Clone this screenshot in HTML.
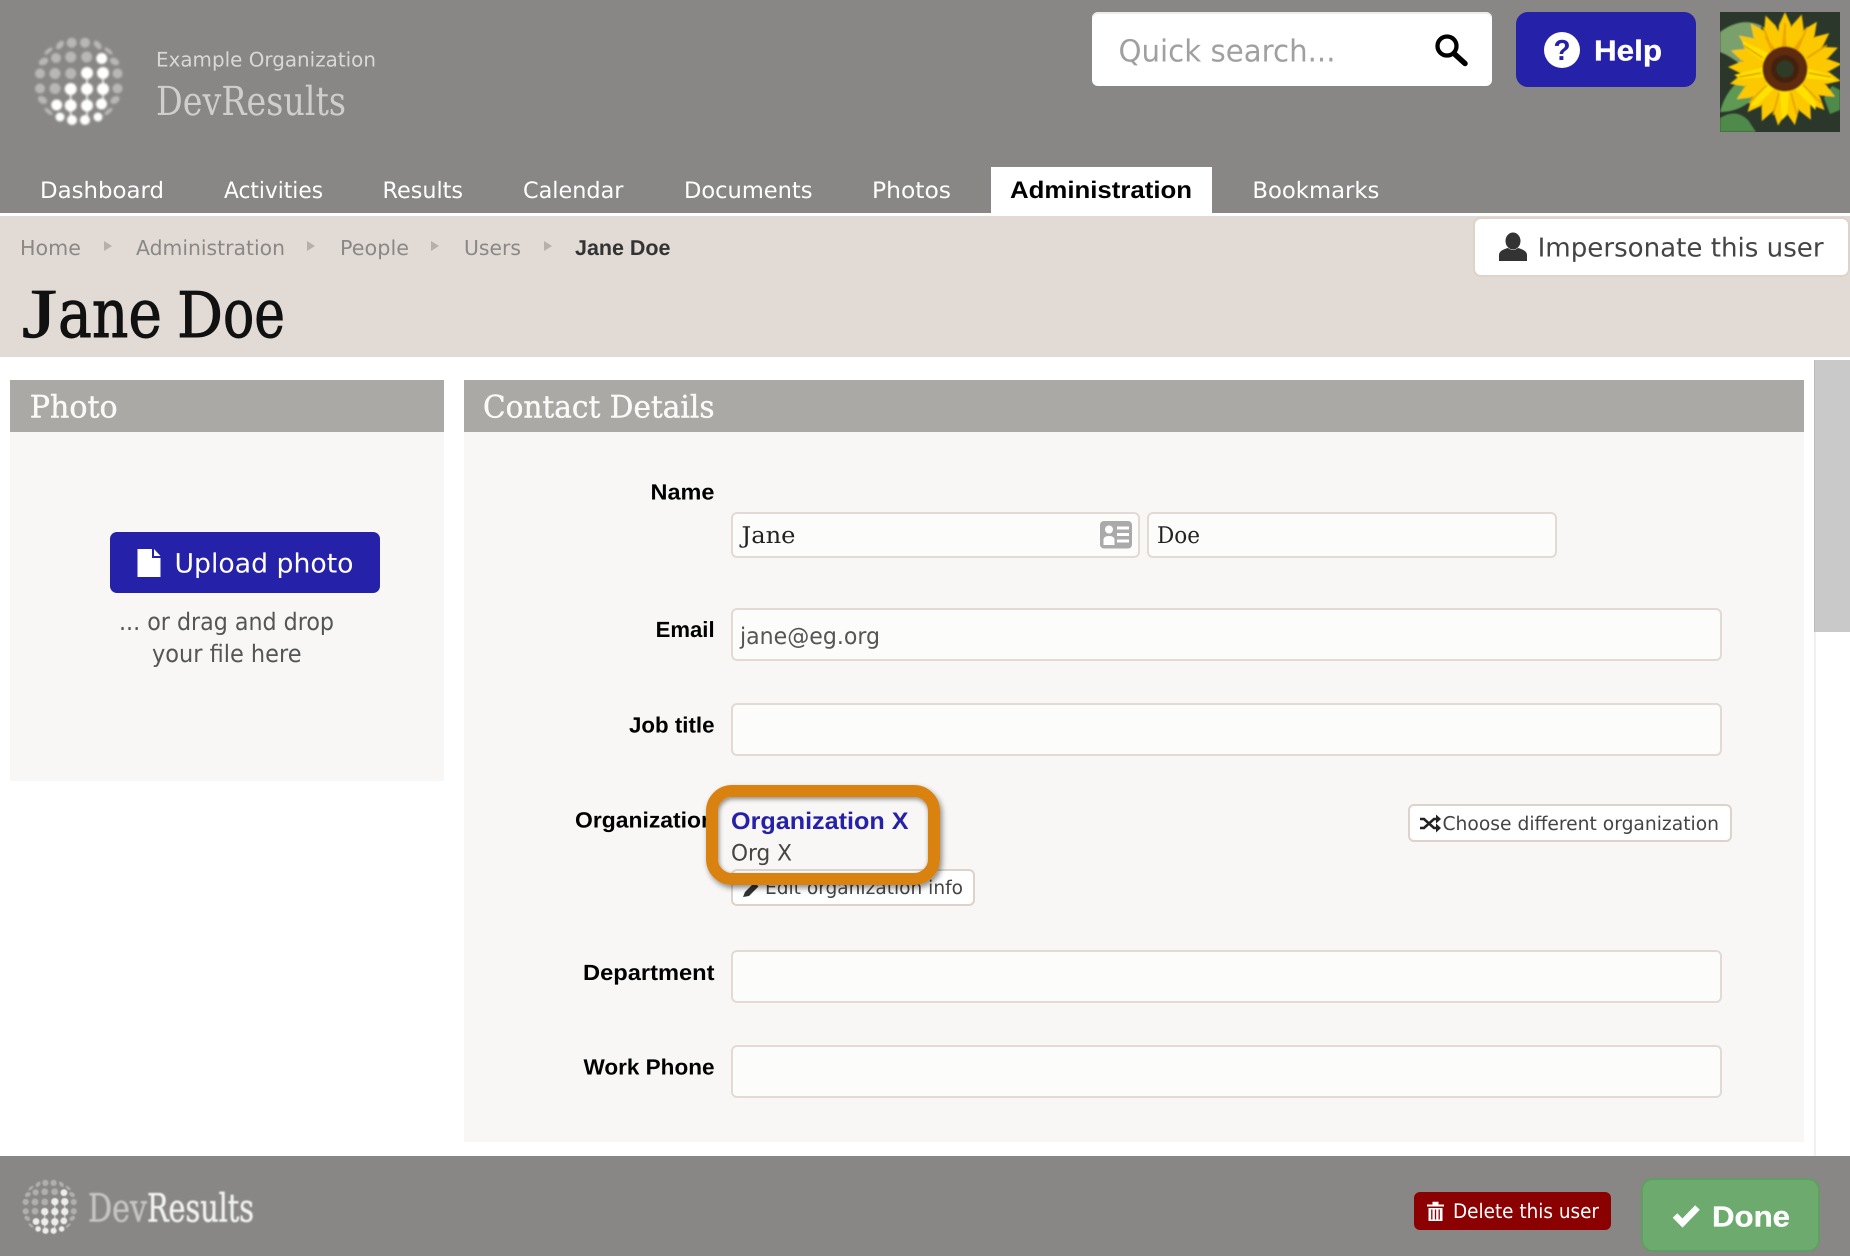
<!DOCTYPE html>
<html lang="en"><head><meta charset="utf-8"><title>Jane Doe - DevResults</title>
<style>
html,body{margin:0;padding:0;background:#fff}
body{position:relative;width:1850px;height:1256px;overflow:hidden;font-family:"Liberation Sans",sans-serif}
.b{position:absolute;box-sizing:border-box}
.inp{background:#fcfcfa;border:2px solid #e2dbd5;border-radius:6px}
.btn{background:#fff;border:2px solid #dcd3ca;border-radius:6px}
svg.o{position:absolute;left:0;top:0;z-index:1}
text{text-rendering:geometricPrecision}
.s{font-family:"DejaVu Sans",sans-serif}
.bd{font-family:"Liberation Sans",sans-serif;font-weight:700}
.sl{font-family:"DejaVu Serif",serif}
</style></head><body>
<div class="b" style="left:0;top:0;width:1850px;height:213px;background:#888785"></div>
<div class="b" style="left:991px;top:167px;width:221px;height:46px;background:#fff"></div>
<div class="b" style="left:0;top:216px;width:1850px;height:141px;background:#e2dbd5"></div>
<div class="b" style="left:1092px;top:12px;width:400px;height:74px;background:#fff;border-radius:6px;box-shadow:inset 0 2px 0 #eeecea"></div>
<div class="b" style="left:1516px;top:12px;width:180px;height:75px;background:#2521a8;border-radius:12px"></div>
<div class="b btn" style="left:1473px;top:216.500px;width:377px;height:60px;border-radius:8px"></div>
<div class="b" style="left:10px;top:380px;width:434px;height:52px;background:#aaa9a6"></div>
<div class="b" style="left:10px;top:432px;width:434px;height:349px;background:#f8f7f5"></div>
<div class="b" style="left:464px;top:380px;width:1340px;height:52px;background:#aaa9a6"></div>
<div class="b" style="left:464px;top:432px;width:1340px;height:710px;background:#f8f7f5"></div>
<div class="b" style="left:110px;top:532px;width:270px;height:61px;background:#2521a8;border-radius:7px"></div>
<input class="b inp" style="left:731px;top:512px;width:409px;height:46px" aria-label="First name">
<input class="b inp" style="left:1147px;top:512px;width:410px;height:46px" aria-label="Last name">
<input class="b inp" style="left:731px;top:608px;width:991px;height:53px" aria-label="Email">
<input class="b inp" style="left:731px;top:703px;width:991px;height:53px" aria-label="Job title">
<input class="b inp" style="left:731px;top:950px;width:991px;height:53px" aria-label="Department">
<input class="b inp" style="left:731px;top:1045px;width:991px;height:53px" aria-label="Work phone">
<div class="b btn" style="left:731px;top:869px;width:244px;height:37px"></div>
<div class="b btn" style="left:1408px;top:804px;width:324px;height:38px"></div>
<div class="b" style="left:1814px;top:360px;width:36px;height:796px;background:#fff;border-left:2px solid #f0f0f0"></div>
<div class="b" style="left:1814px;top:360px;width:36px;height:272px;background:#c9c9c9;border-left:1px solid #bbb"></div>
<div class="b" style="left:0;top:1156px;width:1850px;height:100px;background:#888785"></div>
<div class="b" style="left:1414px;top:1192px;width:197px;height:38px;background:#8b0000;border-radius:6px"></div>
<div class="b" style="left:1641px;top:1178px;width:179px;height:74px;background:#6daa6d;border:2px solid #5f9f62;border-radius:12px"></div>
<div class="b" style="left:706px;top:785px;width:234px;height:100px;border:12.5px solid #d9820f;border-radius:26px;z-index:2;box-shadow:2px 3px 6px rgba(0,0,0,.45),inset 1px 2px 5px rgba(0,0,0,.45)"></div>

<svg class="o" width="1850" height="1256" viewBox="0 0 1850 1256" xmlns="http://www.w3.org/2000/svg">
<defs>
<filter id="bl"><feGaussianBlur stdDeviation=".55"/></filter>
<filter id="bl1" x="-10%" y="-10%" width="120%" height="120%"><feGaussianBlur stdDeviation="1"/></filter>
<filter id="bl2"><feGaussianBlur stdDeviation=".8"/></filter>
<clipPath id="sf"><rect x="1720" y="12" width="120" height="120"/></clipPath>
<symbol id="globe" viewBox="30 30 100 100" overflow="visible">
<g filter="url(#bl1)">
<g fill="#b8b7b5">
<circle cx="71.7" cy="42.7" r="5"/><circle cx="85" cy="42.7" r="5"/>
<ellipse cx="60" cy="45" rx="3" ry="5" transform="rotate(40 60 45)"/><ellipse cx="97.7" cy="45" rx="3" ry="5" transform="rotate(-40 97.7 45)"/>
<ellipse cx="48.5" cy="51" rx="2" ry="5" transform="rotate(50 48.5 51)"/><ellipse cx="108.5" cy="51" rx="2" ry="5" transform="rotate(-50 108.5 51)"/>
<ellipse cx="43.5" cy="61.5" rx="3.5" ry="5" transform="rotate(60 43.5 61.5)"/><circle cx="56" cy="58" r="5"/><circle cx="70.7" cy="57" r="5.5"/><circle cx="86.7" cy="57" r="5.5"/><ellipse cx="114.5" cy="61.5" rx="3.5" ry="5" transform="rotate(-60 114.5 61.5)"/>
<circle cx="40" cy="73.5" r="5"/><circle cx="55" cy="73.5" r="5.5"/><circle cx="70.7" cy="73.5" r="5.5"/><circle cx="117.5" cy="73.5" r="5"/>
<circle cx="40" cy="88.5" r="5"/><circle cx="55" cy="88.5" r="5.5"/><circle cx="117.5" cy="88.5" r="5"/>
<ellipse cx="42.5" cy="100" rx="3.5" ry="5" transform="rotate(-55 42.5 100)"/><ellipse cx="115" cy="100" rx="3.5" ry="5" transform="rotate(55 115 100)"/>
<ellipse cx="48.5" cy="111.5" rx="2" ry="5" transform="rotate(-50 48.5 111.5)"/><ellipse cx="108.5" cy="111.5" rx="2" ry="5" transform="rotate(50 108.5 111.5)"/>
</g>
<g fill="#fff">
<circle cx="101.7" cy="58.5" r="5.5"/>
<circle cx="87" cy="73" r="6"/><circle cx="103" cy="73" r="6"/>
<circle cx="70.7" cy="89" r="6"/><circle cx="87" cy="89" r="6"/><circle cx="103" cy="89" r="6"/>
<circle cx="56.7" cy="105" r="5.5"/><circle cx="70.7" cy="105.5" r="6"/><circle cx="87" cy="105.5" r="6"/><circle cx="101.5" cy="104" r="5.5"/>
<circle cx="60" cy="117" r="4.5"/><circle cx="72" cy="120" r="5"/><circle cx="85" cy="120" r="5"/><circle cx="98" cy="117" r="4.5"/>
<path d="M87 73V89M103 73V89M70.700 89V105M87 89V120M103 89V104M70.700 105V120" stroke="#fff" stroke-width="1.500"/>
</g>
</g>
</symbol>
</defs>

<use href="#globe" x="30" y="30" width="100" height="100"/>
<use href="#globe" opacity=".85" x="19.500" y="1175" width="62" height="62"/>

<text class="s" x="156" y="66.7" font-size="20" fill="#d9d8d6" textLength="220" lengthAdjust="spacingAndGlyphs">Example Organization</text>
<text class="sl" x="156" y="115" font-size="40" fill="#cfcecc" textLength="190" lengthAdjust="spacingAndGlyphs">DevResults</text>

<g class="s" font-size="22.6" fill="#fff">
<text x="40" y="198" textLength="124" lengthAdjust="spacingAndGlyphs">Dashboard</text>
<text x="224" y="198" textLength="99" lengthAdjust="spacingAndGlyphs">Activities</text>
<text x="382.5" y="198" textLength="80.5" lengthAdjust="spacingAndGlyphs">Results</text>
<text x="523" y="198" textLength="100.500" lengthAdjust="spacingAndGlyphs">Calendar</text>
<text x="684" y="198" textLength="128.500" lengthAdjust="spacingAndGlyphs">Documents</text>
<text x="872" y="198" textLength="79" lengthAdjust="spacingAndGlyphs">Photos</text>
<text x="1252.4" y="198" textLength="127" lengthAdjust="spacingAndGlyphs">Bookmarks</text>
</g>
<text class="bd" x="1010" y="198" font-size="24" fill="#000" textLength="182" lengthAdjust="spacingAndGlyphs">Administration</text>

<text class="s" x="1118.5" y="61.7" font-size="30.500" fill="#a0a0a0" textLength="217" lengthAdjust="spacingAndGlyphs">Quick search...</text>
<circle cx="1447" cy="46" r="9.5" fill="none" stroke="#000" stroke-width="4.300"/>
<path d="M1454 53.5L1465 63.5" stroke="#000" stroke-width="5.500" stroke-linecap="round"/>

<circle cx="1562" cy="50" r="18" fill="#fff"/>
<text class="bd" x="1553.5" y="60" font-size="29" fill="#2521a8" textLength="17" lengthAdjust="spacingAndGlyphs">?</text>
<text class="bd" x="1594" y="60.7" font-size="29" fill="#fff" stroke="#fff" stroke-width=".3" textLength="68" lengthAdjust="spacingAndGlyphs">Help</text>

<!-- sunflower -->
<g clip-path="url(#sf)">
<rect x="1720" y="12" width="120" height="120" fill="#2b372a"/>
<g filter="url(#bl2)">
<path d="M1720 32q22-16 42-6l-8 20-14 18q-10-8-20-12z" fill="#7aa06c"/>
<path d="M1720 112q6-24 26-36l6 24q-14 12-32 12z" fill="#5f9a55"/>
<path d="M1720 132v-14q16-10 28 2l8 12z" fill="#4f8a4c"/>
<path d="M1840 90l-8-4-8 12 6 16 10-4z" fill="#4f8a4c"/>
<g transform="translate(1785 69)">
<circle r="38" fill="#f6bc00"/>
<g fill="#fcc800">
<path d="M-9 -14L-6 -44 0 -57 6 -44 9 -14z"/>
<path d="M-9 -14L-6 -44 0 -57 6 -44 9 -14z" transform="rotate(17)"/>
<path d="M-9 -14L-6 -44 0 -57 6 -44 9 -14z" transform="rotate(34)"/>
<path d="M-9 -14L-6 -44 0 -57 6 -44 9 -14z" transform="rotate(51)"/>
<path d="M-9 -14L-6 -44 0 -57 6 -44 9 -14z" transform="rotate(68)"/>
<path d="M-9 -14L-6 -44 0 -57 6 -44 9 -14z" transform="rotate(85)"/>
<path d="M-9 -14L-6 -44 0 -57 6 -44 9 -14z" transform="rotate(102)"/>
<path d="M-9 -14L-6 -44 0 -57 6 -44 9 -14z" transform="rotate(119)"/>
<path d="M-9 -14L-6 -44 0 -57 6 -44 9 -14z" transform="rotate(136)"/>
<path d="M-9 -14L-6 -44 0 -57 6 -44 9 -14z" transform="rotate(153)"/>
<path d="M-9 -14L-6 -44 0 -57 6 -44 9 -14z" transform="rotate(170)"/>
<path d="M-9 -14L-6 -44 0 -57 6 -44 9 -14z" transform="rotate(187)"/>
<path d="M-9 -14L-6 -44 0 -57 6 -44 9 -14z" transform="rotate(204)"/>
<path d="M-9 -14L-6 -44 0 -57 6 -44 9 -14z" transform="rotate(221)"/>
<path d="M-9 -14L-6 -44 0 -57 6 -44 9 -14z" transform="rotate(238)"/>
<path d="M-9 -14L-6 -44 0 -57 6 -44 9 -14z" transform="rotate(255)"/>
<path d="M-9 -14L-6 -44 0 -57 6 -44 9 -14z" transform="rotate(272)"/>
<path d="M-9 -14L-6 -44 0 -57 6 -44 9 -14z" transform="rotate(289)"/>
<path d="M-9 -14L-6 -44 0 -57 6 -44 9 -14z" transform="rotate(306)"/>
<path d="M-9 -14L-6 -44 0 -57 6 -44 9 -14z" transform="rotate(323)"/>
<path d="M-9 -14L-6 -44 0 -57 6 -44 9 -14z" transform="rotate(340)"/>
</g>
<g fill="#ffe100">
<path d="M-5 -14L-2 -46 3 -51 6 -14z" transform="rotate(100)"/>
<path d="M-5 -14L-2 -46 3 -51 6 -14z" transform="rotate(140)"/>
<path d="M-5 -14L-2 -46 3 -51 6 -14z" transform="rotate(180)"/>
<path d="M-5 -14L-2 -46 3 -51 6 -14z" transform="rotate(220)"/>
<path d="M-5 -14L-2 -46 3 -51 6 -14z" transform="rotate(260)"/>
<path d="M-5 -14L-2 -46 3 -51 6 -14z" transform="rotate(300)"/>
</g>
<g stroke="#e09a00" stroke-width="1.400" fill="none">
<path d="M0 -24V-46M13 -20L22 -42M-13 -20L-22 -42M22 -11L42 -24M-22 -11L-42 -24M24 4L46 8M-24 4L-46 8M18 16L36 34M-18 16L-36 34M6 24L12 46M-6 24L-12 46"/>
</g>
<g fill="#eda500">
<path d="M-4 -14L-1 -42 3 -14z"/>
<path d="M-4 -14L-1 -40 3 -14z" transform="rotate(-30)"/>
<path d="M-4 -14L-1 -40 3 -14z" transform="rotate(30)"/>
</g>
<circle r="22.500" fill="#5e2c08"/>
<circle r="14" fill="#432408"/>
<circle r="8.500" fill="#2d3a28"/>
</g>
</g>
</g>

<!-- breadcrumbs -->
<g class="s" font-size="20.5" fill="#8a8886">
<text x="20" y="255" textLength="61" lengthAdjust="spacingAndGlyphs">Home</text>
<text x="136" y="255" textLength="149" lengthAdjust="spacingAndGlyphs">Administration</text>
<text x="340" y="255" textLength="69" lengthAdjust="spacingAndGlyphs">People</text>
<text x="464" y="255" textLength="57" lengthAdjust="spacingAndGlyphs">Users</text>
</g>
<g fill="#b5b0aa">
<path d="M104 241l8 5-8 5z"/><path d="M307 241l8 5-8 5z"/><path d="M431 241l8 5-8 5z"/><path d="M544 241l8 5-8 5z"/>
</g>
<text class="bd" x="575" y="255" font-size="21.5" fill="#333" textLength="95.500" lengthAdjust="spacingAndGlyphs">Jane Doe</text>

<text fill="#111" stroke="#111" stroke-width="1" class="sl" y="337"><tspan x="22" font-family="Liberation Serif,serif" font-size="70" textLength="35" lengthAdjust="spacingAndGlyphs">J</tspan><tspan x="58" font-size="68" textLength="104" lengthAdjust="spacingAndGlyphs">ane</tspan> <tspan x="177" font-size="63" textLength="46" lengthAdjust="spacingAndGlyphs">D</tspan><tspan x="223" font-size="68" textLength="62" lengthAdjust="spacingAndGlyphs">oe</tspan></text>

<!-- impersonate -->
<ellipse cx="1513" cy="241" rx="7.5" ry="8.5" fill="#333"/>
<path d="M1499 261v-6c0-4 5-6 9-7q5 4 10 0c4 1 9 3 9 7v6z" fill="#333"/>
<text class="s" x="1537.6" y="256.7" font-size="26" fill="#444" textLength="286" lengthAdjust="spacingAndGlyphs">Impersonate this user</text>

<!-- panel headers -->
<text class="sl" x="29.7" y="417.7" font-size="31" fill="#fbfaf8" stroke="#fbfaf8" stroke-width=".4" textLength="88" lengthAdjust="spacingAndGlyphs">Photo</text>
<text class="sl" x="483" y="417.7" font-size="31" fill="#fbfaf8" stroke="#fbfaf8" stroke-width=".4" textLength="231.5" lengthAdjust="spacingAndGlyphs">Contact Details</text>

<!-- upload -->
<path d="M137.5 549h14.5v9h8.5v19h-23z" fill="#fff"/><path d="M154 549l6.5 7h-6.5z" fill="#fff"/>
<text class="s" x="174.500" y="572.7" font-size="26.5" fill="#fff" textLength="179" lengthAdjust="spacingAndGlyphs">Upload photo</text>
<text class="s" x="119" y="630" font-size="24" fill="#555" textLength="215" lengthAdjust="spacingAndGlyphs">... or drag and drop</text>
<text class="s" x="152" y="662" font-size="24" fill="#555" textLength="149.5" lengthAdjust="spacingAndGlyphs">your file here</text>

<!-- labels -->
<g class="bd" font-size="22" fill="#000">
<text x="650.500" y="499.5" textLength="64" lengthAdjust="spacingAndGlyphs">Name</text>
<text x="655.600" y="637" textLength="59" lengthAdjust="spacingAndGlyphs">Email</text>
<text x="629" y="732.7" textLength="85.5" lengthAdjust="spacingAndGlyphs">Job title</text>
<text x="575" y="827.7" textLength="140" lengthAdjust="spacingAndGlyphs">Organization</text>
<text x="583" y="980" textLength="131.500" lengthAdjust="spacingAndGlyphs">Department</text>
<text x="583.5" y="1074.7" textLength="131" lengthAdjust="spacingAndGlyphs">Work Phone</text>
</g>

<!-- input values -->
<text class="sl" x="741.500" y="543" font-size="23" fill="#222" textLength="54" lengthAdjust="spacingAndGlyphs">Jane</text>
<text class="sl" x="1157" y="543" font-size="23" fill="#222" textLength="43" lengthAdjust="spacingAndGlyphs">Doe</text>
<text class="s" x="740" y="644" font-size="23" fill="#555" textLength="140" lengthAdjust="spacingAndGlyphs">jane@eg.org</text>

<rect x="1100" y="521" width="32" height="27.5" rx="4" fill="#aaa"/>
<circle cx="1109" cy="529.5" r="4" fill="#fff"/>
<path d="M1103.5 545v-5q0-4 5.5-4t5.5 4v5z" fill="#fff"/>
<path d="M1117 526.5h12v3h-12zM1117 533h12v3h-12zM1117 539.5h12v3h-12z" fill="#fff"/>

<!-- organization -->
<text class="bd" x="731" y="829" font-size="24" fill="#2521a8" textLength="177.500" lengthAdjust="spacingAndGlyphs">Organization X</text>
<text class="s" x="731" y="860.500" font-size="22.5" fill="#444" textLength="61" lengthAdjust="spacingAndGlyphs">Org X</text>
<path d="M743 897l2-5 9.500-9.500 4 4-9.500 9.500z" fill="#333"/>
<text class="s" x="765" y="894" font-size="19" fill="#444" textLength="198" lengthAdjust="spacingAndGlyphs">Edit organization info</text>

<path d="M1420 819h4l10 9h3M1420 828h4l10-9h3" fill="none" stroke="#222" stroke-width="2.6"/>
<path d="M1436 814.500l5 4.500-5 4.500zM1436 823.500l5 4.500-5 4.500z" fill="#222"/>
<text class="s" x="1442.500" y="830" font-size="19" fill="#444" textLength="276.500" lengthAdjust="spacingAndGlyphs">Choose different organization</text>

<!-- footer -->
<g filter="url(#bl2)">
<text class="sl" x="88" y="1221.700" font-size="39" fill="#c6c5c3" stroke="#c6c5c3" stroke-width=".5" textLength="59" lengthAdjust="spacingAndGlyphs">Dev</text>
<text class="sl" x="147" y="1221.700" font-size="39" fill="#f2f2f0" stroke="#f2f2f0" stroke-width=".5" textLength="107" lengthAdjust="spacingAndGlyphs">Results</text>
</g>

<path d="M1427 1204.500h5.500v-2.800h6v2.800h5.500v2h-17z" fill="#fff"/>
<path d="M1428.500 1208h14v13h-14z" fill="#fff"/>
<path d="M1431.800 1209.500v10M1435.500 1209.500v10M1439.200 1209.500v10" stroke="#8b0000" stroke-width="1.300"/>
<text class="s" x="1453" y="1218" font-size="20" fill="#fff" textLength="146" lengthAdjust="spacingAndGlyphs">Delete this user</text>

<path d="M1675 1215.500l7.500 7.500 15-15.500" fill="none" stroke="#fff" stroke-width="6.500"/>
<text class="bd" x="1712" y="1226.700" font-size="29" fill="#fff" stroke="#fff" stroke-width=".3" textLength="78" lengthAdjust="spacingAndGlyphs">Done</text>
</svg>
</body></html>
